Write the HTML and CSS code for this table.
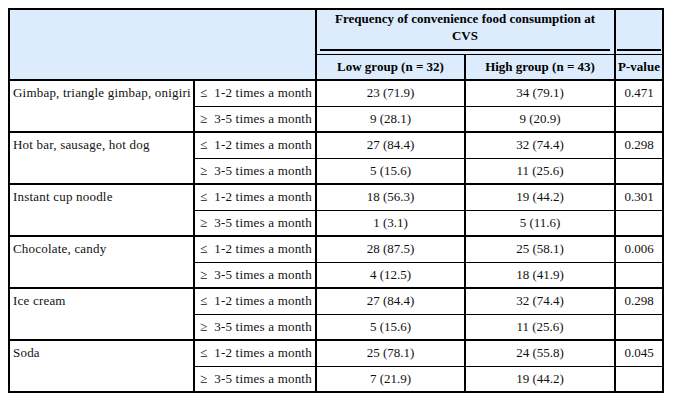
FILE: index.html
```html
<!DOCTYPE html>
<html lang="en">
<head>
<meta charset="utf-8">
<title>Frequency of convenience food consumption at CVS</title>
<link rel="stylesheet" href="styles.css">
</head>
<body>
<table class="tbl">
  <colgroup>
    <col class="c-food">
    <col class="c-freq">
    <col class="c-low">
    <col class="c-high">
    <col class="c-p">
  </colgroup>
  <thead>
    <tr class="h1">
      <th class="blank" colspan="2" rowspan="2"></th>
      <th class="span" colspan="2"><div class="rule">Frequency of convenience food consumption at<br>CVS</div></th>
      <th class="pspan"><div class="rule"></div></th>
    </tr>
    <tr class="h2">
      <th>Low group (n = 32)</th>
      <th>High group (n = 43)</th>
      <th class="p">P-value</th>
    </tr>
  </thead>
  <tbody>
    <tr class="r1"><td class="food" rowspan="2">Gimbap, triangle gimbap, onigiri</td><td class="freq">≤&nbsp; 1-2 times a month</td><td>23 (71.9)</td><td>34 (79.1)</td><td class="p">0.471</td></tr>
    <tr class="r2"><td class="freq">≥&nbsp; 3-5 times a month</td><td>9 (28.1)</td><td>9 (20.9)</td><td class="p"></td></tr>
    <tr class="r1"><td class="food" rowspan="2">Hot bar, sausage, hot dog</td><td class="freq">≤&nbsp; 1-2 times a month</td><td>27 (84.4)</td><td>32 (74.4)</td><td class="p">0.298</td></tr>
    <tr class="r2"><td class="freq">≥&nbsp; 3-5 times a month</td><td>5 (15.6)</td><td>11 (25.6)</td><td class="p"></td></tr>
    <tr class="r1"><td class="food" rowspan="2">Instant cup noodle</td><td class="freq">≤&nbsp; 1-2 times a month</td><td>18 (56.3)</td><td>19 (44.2)</td><td class="p">0.301</td></tr>
    <tr class="r2"><td class="freq">≥&nbsp; 3-5 times a month</td><td>1 (3.1)</td><td>5 (11.6)</td><td class="p"></td></tr>
    <tr class="r1"><td class="food" rowspan="2">Chocolate, candy</td><td class="freq">≤&nbsp; 1-2 times a month</td><td>28 (87.5)</td><td>25 (58.1)</td><td class="p">0.006</td></tr>
    <tr class="r2"><td class="freq">≥&nbsp; 3-5 times a month</td><td>4 (12.5)</td><td>18 (41.9)</td><td class="p"></td></tr>
    <tr class="r1"><td class="food" rowspan="2">Ice cream</td><td class="freq">≤&nbsp; 1-2 times a month</td><td>27 (84.4)</td><td>32 (74.4)</td><td class="p">0.298</td></tr>
    <tr class="r2"><td class="freq">≥&nbsp; 3-5 times a month</td><td>5 (15.6)</td><td>11 (25.6)</td><td class="p"></td></tr>
    <tr class="r1"><td class="food" rowspan="2">Soda</td><td class="freq">≤&nbsp; 1-2 times a month</td><td>25 (78.1)</td><td>24 (55.8)</td><td class="p">0.045</td></tr>
    <tr class="r2"><td class="freq">≥&nbsp; 3-5 times a month</td><td>7 (21.9)</td><td>19 (44.2)</td><td class="p"></td></tr>
  </tbody>
</table>
</body>
</html>
```

FILE: styles.css
```css
html, body {
  margin: 0;
  padding: 0;
  background: #ffffff;
}

body {
  padding: 8px;
  font-family: "Liberation Serif", "Times New Roman", serif;
  font-size: 13px;
  color: #111;
}

.tbl {
  width: 656px;
  table-layout: fixed;
  border-collapse: separate;
  border-spacing: 0;
  border-top: 2px solid #000;
  border-left: 2px solid #000;
}

.c-food { width: 185px; }
.c-freq { width: 122px; }
.c-low { width: 149px; }
.c-high { width: 150px; }
.c-p { width: 48px; }

.tbl th,
.tbl td {
  box-sizing: border-box;
  border-right: 2px solid #000;
  padding: 2px 4px 0;
  line-height: 19px;
  vertical-align: top;
  text-align: center;
  white-space: nowrap;
}

.tbl th {
  background: #ddecfc;
  font-weight: bold;
  color: #000;
}

.h1 { height: 45px; }

.h1 th {
  border-bottom: 1px solid #000;
  vertical-align: bottom;
  line-height: 17px;
}

.h1 .blank {
  border-bottom: 2px solid #000;
}

.h1 .span {
  padding: 0 4px 3px 3px;
}

.h1 .pspan {
  padding: 0 1px 3px 1px;
}

.rule {
  border-bottom: 2px solid #000;
  padding-bottom: 5px;
}

.h2 { height: 26px; }

.h2 th {
  border-bottom: 2px solid #000;
}

.tbl .p {
  padding-left: 1px;
  padding-right: 1px;
}

.r1, .r2 { height: 26px; }

.r1 td {
  border-bottom: 1px solid #000;
}

.r2 td,
.tbl td.food {
  border-bottom: 2px solid #000;
}

.tbl td.food,
.tbl td.freq {
  text-align: left;
  letter-spacing: 0.2px;
}

.tbl td.food {
  padding-left: 3px;
}

.tbl td.freq {
  padding-left: 5px;
}
```
